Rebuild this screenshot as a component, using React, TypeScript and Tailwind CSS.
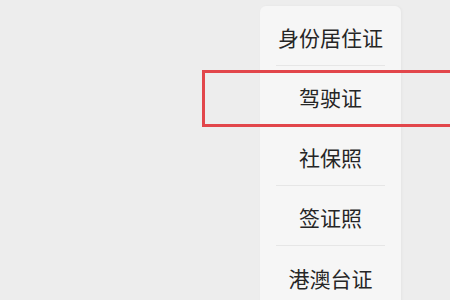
const items = ['身份居住证', '驾驶证', '社保照', '签证照', '港澳台证'];

export default function App() {
  return (
    <div
      className="relative h-[300px] w-[450px] overflow-hidden bg-[#ededed]"
      style={{ fontFamily: '"Noto Sans CJK SC", "Noto Sans", sans-serif' }}
    >
      <div className="ml-[260px] mt-[6px] w-[141px] rounded-md bg-[#f6f6f6] shadow-[1px_0_3px_rgba(0,0,0,0.04)]">
        {items.map((label, i) => (
          <div key={label} className="px-4">
            <div
              className={`flex h-[60px] items-center justify-center pt-[5px] text-[21px] text-[#262626] ${
                i < items.length - 1 ? 'border-b border-[#e6e6e6]' : ''
              }`}
            >
              {label}
            </div>
          </div>
        ))}
      </div>
      {/* red highlight frame over the selected row */}
      <div className="absolute left-[202px] top-[70px] h-[57px] w-[260px] border-[3px] border-[#e2464b]" />
    </div>
  );
}
